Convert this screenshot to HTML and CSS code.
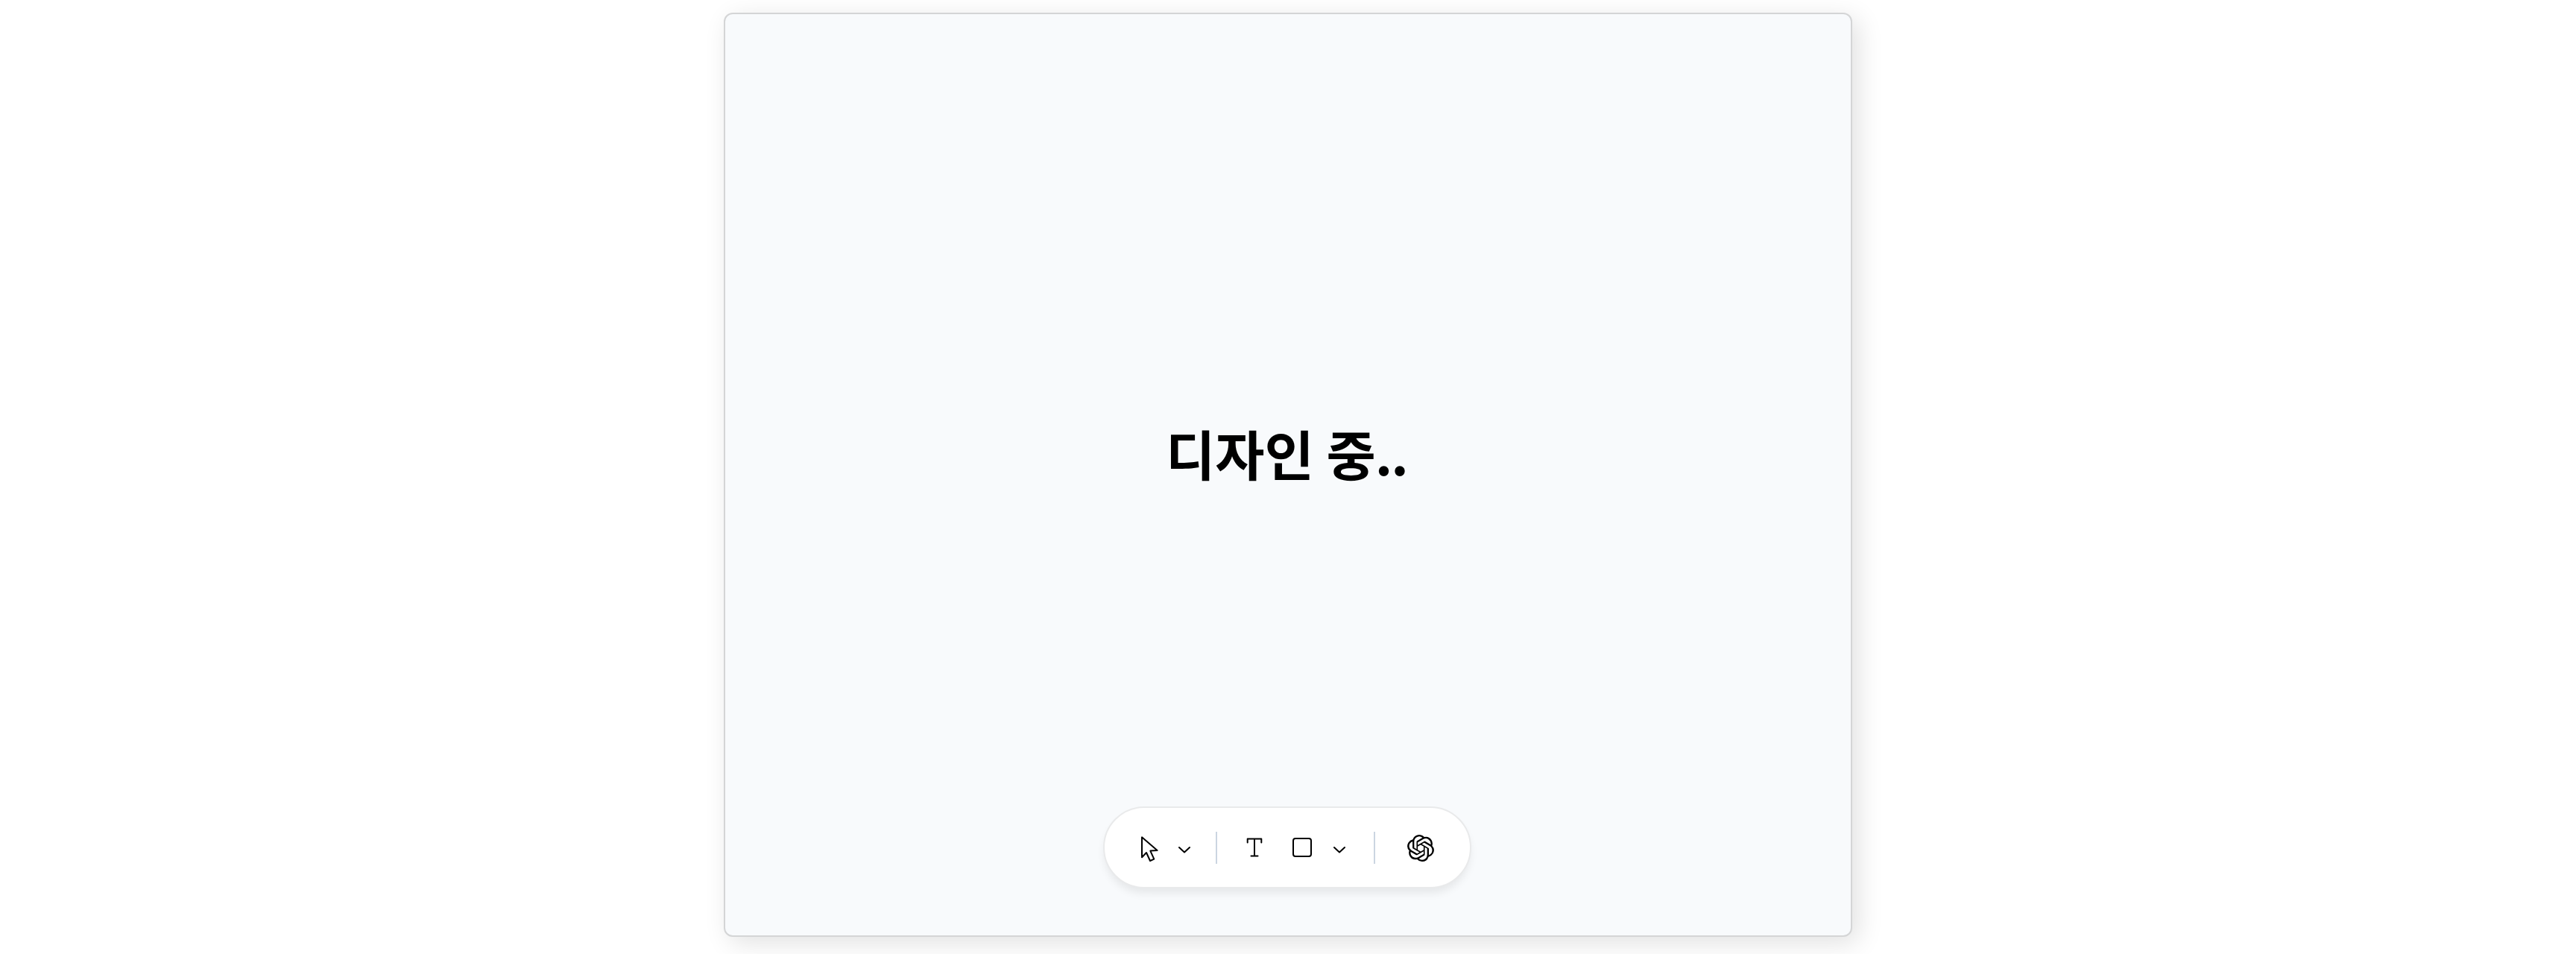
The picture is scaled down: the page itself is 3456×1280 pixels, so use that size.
FILE: index.html
```html
<!DOCTYPE html>
<html lang="ko">
<head>
<meta charset="utf-8">
<title>디자인 중..</title>
<link rel="stylesheet" href="styles.css">
</head>
<body>
<main class="board">
  <h1 class="title">디자인 중<span class="dots">..</span></h1>
  <nav class="toolbar">
    <svg class="icon cursor" viewBox="0 0 24 36"><path d="M2 2.3V29.3L8 23L13 34L18.3 31.7L13.3 20.6L22.6 20Z"/></svg>
    <svg class="icon chevron" viewBox="0 0 16 10"><path d="M1 2L8 8.5L15 2"/></svg>
    <span class="divider"></span>
    <svg class="icon letter" viewBox="0 0 22 26"><path d="M1.7 6.5V1.5H20.3V6.5M11 1.5V24.5M6.5 24.5H15.5"/></svg>
    <svg class="icon square" viewBox="0 0 26 26"><rect x="1" y="1" width="24" height="24" rx="3"/></svg>
    <svg class="icon chevron second" viewBox="0 0 16 10"><path d="M1 2L8 8.5L15 2"/></svg>
    <span class="divider last"></span>
    <svg class="knot" viewBox="0 0 24 24"><path d="M22.2819 9.8211a5.9847 5.9847 0 0 0-.5157-4.9108 6.0462 6.0462 0 0 0-6.5098-2.9A6.0651 6.0651 0 0 0 4.9807 4.1818a5.9847 5.9847 0 0 0-3.9977 2.9 6.0462 6.0462 0 0 0 .7427 7.0966 5.98 5.98 0 0 0 .511 4.9107 6.051 6.051 0 0 0 6.5146 2.9001A5.9847 5.9847 0 0 0 13.2599 24a6.0557 6.0557 0 0 0 5.7718-4.2058 5.9894 5.9894 0 0 0 3.9977-2.9001 6.0557 6.0557 0 0 0-.7475-7.073zm-9.022 12.6081a4.4755 4.4755 0 0 1-2.8764-1.0408l.1419-.0804 4.7783-2.7582a.7948.7948 0 0 0 .3927-.6813v-6.7369l2.02 1.1686a.071.071 0 0 1 .038.052v5.5826a4.504 4.504 0 0 1-4.4945 4.4944zm-9.6607-4.1254a4.4708 4.4708 0 0 1-.5346-3.0137l.142.0852 4.783 2.7582a.7712.7712 0 0 0 .7806 0l5.8428-3.3685v2.3324a.0804.0804 0 0 1-.0332.0615L9.74 19.9502a4.4992 4.4992 0 0 1-6.1408-1.6464zM2.3408 7.8956a4.485 4.485 0 0 1 2.3655-1.9728V11.6a.7664.7664 0 0 0 .3879.6765l5.8144 3.3543-2.0201 1.1685a.0757.0757 0 0 1-.071 0l-4.8303-2.7865A4.504 4.504 0 0 1 2.3408 7.872zm16.5963 3.8558L13.1038 8.364 15.1192 7.2a.0757.0757 0 0 1 .071 0l4.8303 2.7913a4.4944 4.4944 0 0 1-.6765 8.1042v-5.6772a.79.79 0 0 0-.407-.667zm2.0107-3.0231l-.142-.0852-4.7735-2.7818a.7759.7759 0 0 0-.7854 0L9.409 9.2297V6.8974a.0662.0662 0 0 1 .0284-.0615l4.8303-2.7866a4.4992 4.4992 0 0 1 6.6802 4.66zM8.3065 12.863l-2.02-1.1638a.0804.0804 0 0 1-.038-.0567V6.0742a4.4992 4.4992 0 0 1 7.3757-3.4537l-.142.0805L8.704 5.459a.7948.7948 0 0 0-.3927.6813zm1.0976-2.3654l2.602-1.4998 2.6069 1.4998v2.9994l-2.5974 1.4997-2.6067-1.4997Z"/></svg>
  </nav>
</main>
</body>
</html>
```
FILE: styles.css
```css
* { box-sizing: border-box; }
body {
  margin: 0;
  height: 1280px;
  padding-top: 17px;
  overflow: hidden;
  background: #fff;
  font-family: "Noto Sans CJK KR", sans-serif;
}
.board {
  width: 1514px;
  height: 1240px;
  margin: 0 auto;
  display: flex;
  flex-direction: column;
  align-items: center;
  justify-content: space-between;
  padding: 534px 0 63px;
  background: #f8fafc;
  border: 2px solid #d4d5d6;
  border-radius: 12px;
  box-shadow: 8px 8px 34px rgba(0, 0, 0, .12);
}
.title {
  margin: 0;
  font-size: 72px;
  font-weight: 700;
  line-height: 108px;
  color: #000;
  white-space: nowrap;
  word-spacing: -3.3px;
}
.dots { margin: 0 4.3px 0 -1px; letter-spacing: -2px; }
.toolbar {
  width: 494px;
  height: 110px;
  margin-right: 2px;
  display: flex;
  align-items: center;
  padding-left: 48px;
  background: #fff;
  border: 2px solid #e9eaeb;
  border-radius: 55px;
  box-shadow: 0 8px 12px -2px rgba(0, 0, 0, .08);
}
.icon {
  flex: none;
  fill: none;
  stroke: #000;
  stroke-width: 2;
  stroke-linecap: round;
  stroke-linejoin: round;
}
.cursor { width: 24px; height: 36px; margin-top: 4px; }
.chevron { width: 16px; height: 10px; margin: 6px 0 0 27px; }
.divider {
  flex: none;
  width: 2px;
  height: 43px;
  margin: 1px 0 0 34px;
  background: #cbd5e1;
}
.letter { width: 22px; height: 26px; margin-left: 39px; }
.square { width: 26px; height: 26px; margin-left: 40px; }
.second { margin-left: 29px; }
.last { margin-left: 38px; }
.knot { flex: none; width: 36px; height: 36px; margin: 2px 0 0 43px; fill: #000; }
```
